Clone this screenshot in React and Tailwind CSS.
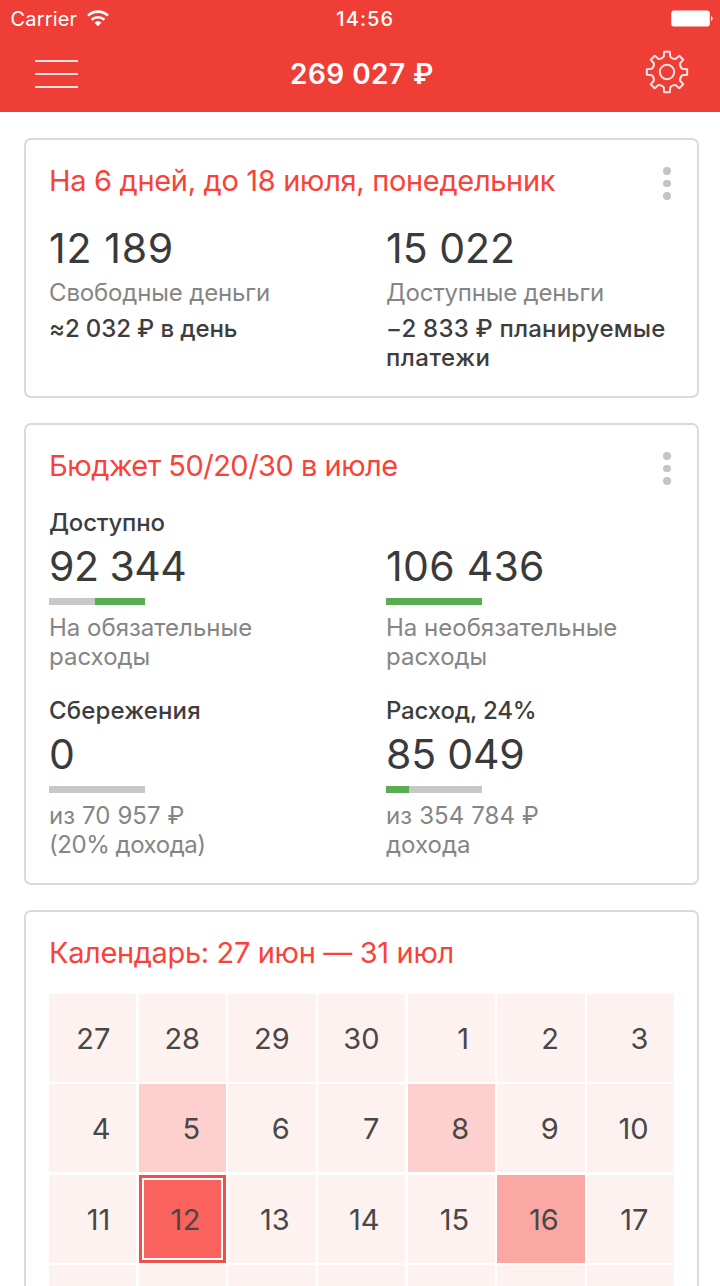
// null days belong to the week that only peeks in at the bottom
const WEEKS = [
  [27, 28, 29, 30, 1, 2, 3],
  [4, 5, 6, 7, 8, 9, 10],
  [11, 12, 13, 14, 15, 16, 17],
  [null, null, null, null, null, null, null],
]

// Days with spending; every other day gets the base tint
const DAY_BG = {
  '1-5': 'bg-[#fdcfcd]',
  '1-8': 'bg-[#fdcfcd]',
  '2-16': 'bg-[#fba8a5]',
}

const labelCls = 'text-[24px] leading-[29px] text-[#858585]'
const strongCls = 'text-[24px] leading-[29px] font-medium text-[#3d3d3d]'
const valueCls = 'text-[41px] leading-[44px] text-[#3a3a3a]'

function gearPath(cx, cy) {
  const pt = (r, deg) => {
    const a = ((deg - 90) * Math.PI) / 180
    return `${(cx + r * Math.cos(a)).toFixed(2)} ${(cy + r * Math.sin(a)).toFixed(2)}`
  }
  let d = ''
  for (let i = 0; i < 8; i++) {
    const a = i * 45
    d += `${i ? 'L' : 'M'}${pt(15.6, a - 12)} L${pt(20.4, a - 8)} L${pt(20.4, a + 8)} L${pt(15.6, a + 12)} Q${pt(13.8, a + 22.5)} ${pt(15.6, a + 33)} `
  }
  return d + 'Z'
}

function WifiIcon() {
  return (
    <svg width="22" height="17" viewBox="0 0 22 17" fill="none" stroke="#fff" strokeWidth="2.6" className="ml-[10px]">
      <path d="M1 5.6a14.6 14.6 0 0 1 20 0" />
      <path d="M4.6 9.8a9.4 9.4 0 0 1 12.8 0" />
      <path d="M11 16.2l-3.4-3.5a5 5 0 0 1 6.8 0z" fill="#fff" stroke="none" />
    </svg>
  )
}

function BatteryIcon() {
  return (
    <svg width="43" height="17" viewBox="0 0 43 17" fill="#fff">
      <rect x="0.3" y="0.5" width="38.5" height="16" rx="2.5" />
      <path d="M40 5.7q3.4 2.8 0 5.6z" />
    </svg>
  )
}

function Header() {
  return (
    <header className="flex h-[111.5px] flex-col bg-[#ef3e36] text-white">
      <div className="grid h-[37px] grid-cols-3 items-center px-[10px] text-[20px] leading-none">
        <div className="flex items-center pl-[0.5px]">
          <span className="tracking-[0.16px]">Carrier</span>
          <WifiIcon />
        </div>
        <span className="pl-[93px] font-medium tracking-[1.1px]">14:56</span>
        <div className="-mr-[4px] flex justify-end">
          <BatteryIcon />
        </div>
      </div>
      <div className="grid h-[73px] grid-cols-3 items-center pr-[30px] pl-[34px]">
        <div className="ml-[0.5px] flex w-[43px] flex-col gap-[11px]">
          <span className="h-[2px] bg-[#fde0de]" />
          <span className="h-[2px] bg-[#fde0de]" />
          <span className="h-[2px] bg-[#fde0de]" />
        </div>
        <span className="text-center text-[28px] leading-[34px] font-semibold tracking-[0.45px] whitespace-nowrap">
          269 027 ₽
        </span>
        <svg width="46" height="46" viewBox="0 0 46 46" fill="none" stroke="#fde4e2" strokeWidth="2" strokeLinejoin="round" className="mb-[4px] justify-self-end">
          <path d={gearPath(23, 23)} />
          <circle cx="23" cy="23" r="7.2" />
        </svg>
      </div>
    </header>
  )
}

function Card({ title, titleCls, menu, className, children }) {
  return (
    <section className={`rounded-[7px] border-2 border-[#dadada] bg-white px-[23px] pt-[23px] ${className}`}>
      <div className="flex items-start justify-between">
        <h2 className={`text-[29px] leading-[36px] whitespace-nowrap text-[#fa4239] ${titleCls}`}>{title}</h2>
        {menu && (
          <div className="mt-[4px] flex flex-col gap-[5px] pr-[3.5px]">
            <span className="size-[7.5px] rounded-full bg-[#c4c4c4]" />
            <span className="size-[7.5px] rounded-full bg-[#c4c4c4]" />
            <span className="size-[7.5px] rounded-full bg-[#c4c4c4]" />
          </div>
        )}
      </div>
      {children}
    </section>
  )
}

function Bar({ from, to }) {
  return (
    <div className="mt-[10px] h-[7px] w-[96px] bg-[#c8c8c8]">
      <div className="h-full bg-[#5aac52]" style={{ marginLeft: `${from}%`, width: `${to - from}%` }} />
    </div>
  )
}

function BudgetItem({ title, titleCls = '', value, valueTracking = '', from, to, lines }) {
  return (
    <div>
      <div className={`h-[29px] ${strongCls} ${titleCls}`}>{title}</div>
      <div className={`mt-[7px] ${valueCls} ${valueTracking}`}>{value}</div>
      <Bar from={from} to={to} />
      <div className={`mt-[8px] whitespace-nowrap ${labelCls}`}>
        {lines.map(([text, cls]) => (
          <div key={text} className={cls}>
            {text}
          </div>
        ))}
      </div>
    </div>
  )
}

function Day({ week, day }) {
  if (week === 2 && day === 12) {
    return (
      <div className="h-[88px] border-[3px] border-[#ee514b] bg-white p-[2px]">
        <div className="flex h-full items-center justify-end bg-[#fa625d] pt-[2px] pr-[20px] tracking-[0.5px]">{day}</div>
      </div>
    )
  }
  return (
    <div className={`flex h-[88px] items-center justify-end pt-[2px] pr-[26px] ${DAY_BG[`${week}-${day}`] || 'bg-[#fef2f1]'}`}>
      {day}
    </div>
  )
}

export default function App() {
  return (
    <div className="h-[1286px] w-[720px] overflow-hidden bg-white font-['Inter','Liberation_Sans',sans-serif]">
      <Header />
      <main className="flex flex-col gap-[25px] pt-[26.5px] pr-[21px] pl-[24px]">
        <Card title="На 6 дней, до 18 июля, понедельник" titleCls="tracking-[-0.32px]" menu className="h-[260px]">
          <div className="mt-[26px] grid grid-cols-[337px_1fr]">
            <div>
              <div className={`tracking-[0.7px] ${valueCls}`}>12 189</div>
              <div className={`mt-[8px] tracking-[-0.15px] ${labelCls}`}>Свободные деньги</div>
              <div className={`mt-[7px] tracking-[-0.12px] ${strongCls}`}>≈2 032 ₽ в день</div>
            </div>
            <div className="whitespace-nowrap">
              <div className={valueCls}>15 022</div>
              <div className={`mt-[8px] tracking-[-0.2px] ${labelCls}`}>Доступные деньги</div>
              <div className={`mt-[7px] ${strongCls}`}>
                <div className="tracking-[0.2px]">−2 833 ₽ планируемые</div>
                <div className="tracking-[0.5px]">платежи</div>
              </div>
            </div>
          </div>
        </Card>

        <Card title="Бюджет 50/20/30 в июле" titleCls="tracking-[-0.5px]" menu className="h-[462px]">
          <div className="mt-[23px] grid grid-cols-[337px_1fr] gap-y-[25px]">
            <BudgetItem
              title="Доступно"
              titleCls="tracking-[-0.2px]"
              value="92 344"
              valueTracking="tracking-[-0.5px]"
              from={48}
              to={100}
              lines={[['На обязательные', ''], ['расходы', '']]}
            />
            <BudgetItem
              value="106 436"
              valueTracking="tracking-[0.3px]"
              from={0}
              to={100}
              lines={[['На необязательные', ''], ['расходы', '']]}
            />
            <BudgetItem
              title="Сбережения"
              titleCls="tracking-[0.15px]"
              value="0"
              from={0}
              to={0}
              lines={[['из 70 957 ₽', 'tracking-[0.08px]'], ['(20% дохода)', 'tracking-[-0.45px]']]}
            />
            <BudgetItem
              title="Расход, 24%"
              titleCls="tracking-[-0.18px]"
              value="85 049"
              valueTracking="tracking-[-0.2px]"
              from={0}
              to={24}
              lines={[['из 354 784 ₽', 'tracking-[0.11px]'], ['дохода', '']]}
            />
          </div>
        </Card>

        <Card title="Календарь: 27 июн — 31 июл" titleCls="tracking-[-0.35px]" className="h-[500px]">
          <div className="mt-[23px] grid w-[625.5px] grid-cols-7 gap-x-[2.3px] gap-y-[2.3px] text-[29px] leading-[36px] text-[#484848]">
            {WEEKS.map((days, week) => days.map((day, i) => <Day key={`${week}-${i}`} week={week} day={day} />))}
          </div>
        </Card>
      </main>
    </div>
  )
}
